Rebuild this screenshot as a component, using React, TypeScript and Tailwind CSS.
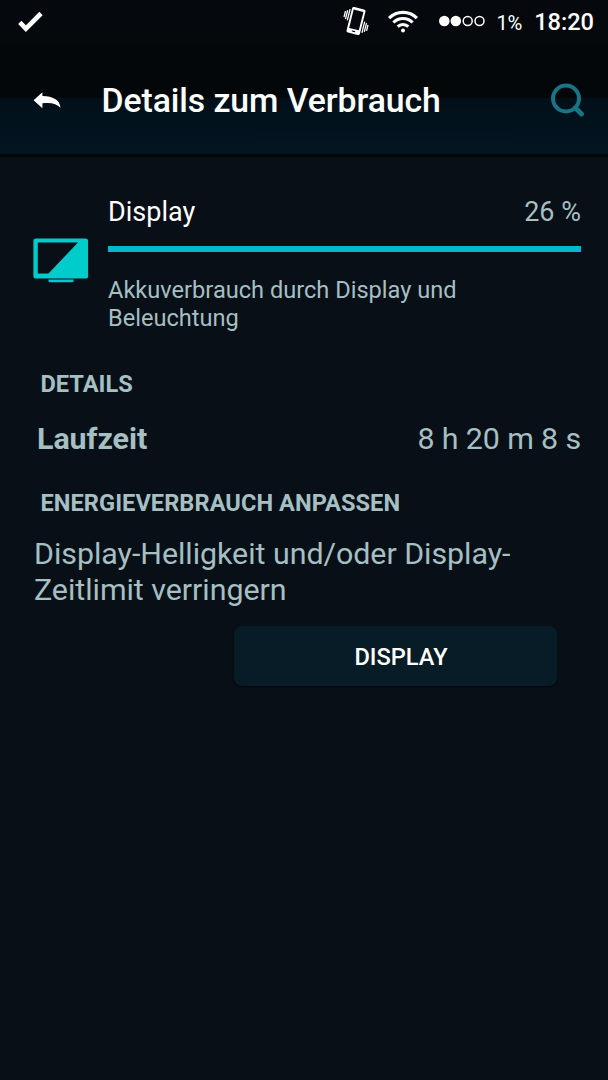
function VibrateIcon() {
  return (
    <svg className="h-7 w-7" viewBox="0 0 28 28" fill="none">
      <g transform="rotate(14 14 14)">
        <rect x="7.1" y="0.8" width="13.8" height="26.4" rx="2" fill="#fff" />
        <rect x="9" y="3.4" width="10" height="19" fill="#05090d" />
        <rect x="12.3" y="24" width="3.4" height="1.2" rx=".5" fill="#05090d" />
        <path d="M5.4 4v11.500M3.3 5.6v9M1.4 7v6M22.6 12.500v11.500M24.7 13.6v9M26.6 15v6" stroke="#fff" strokeWidth="1.300" />
      </g>
    </svg>
  );
}

function WifiIcon() {
  return (
    <svg className="h-6 w-8" viewBox="0 0 32 24" fill="none" stroke="#fff" strokeWidth="3.2" strokeLinecap="butt">
      <path d="M2.1 9.2a19.6 19.6 0 0 1 27.800 0M6.4 13.5a13.5 13.5 0 0 1 19.200 0M10.7 17.7a7.5 7.5 0 0 1 10.600 0" />
      <circle cx="16" cy="21.4" r="2" fill="#fff" stroke="none" />
    </svg>
  );
}

function SignalDots() {
  return (
    <svg className="h-3 w-[46px]" viewBox="0 0 46 12" fill="none">
      <circle cx="5.3" cy="6" r="5.3" fill="#fff" />
      <circle cx="16.8" cy="6" r="5.3" fill="#fff" />
      <circle cx="28.7" cy="6" r="4.5" stroke="#fff" strokeWidth="1.5" />
      <circle cx="40.5" cy="6" r="4.5" stroke="#fff" strokeWidth="1.5" />
    </svg>
  );
}

function StatusBar() {
  return (
    <div className="flex h-[42px] items-center bg-[#05090d] pl-[18px] pr-[14px]">
      <svg className="mt-px h-[22px] w-[26px]" viewBox="0 0 26 22" fill="none" stroke="#fff" strokeWidth="4.6">
        <path d="M1.8 11.3l6.1 6.3L23 2.5" strokeLinejoin="miter" />
      </svg>
      <div className="ml-auto flex items-center">
        <VibrateIcon />
        <div className="ml-[17px] flex">
          <WifiIcon />
        </div>
        <div className="ml-[20px]">
          <SignalDots />
        </div>
        <span className="ml-[11px] mt-[4px] text-[20.2px] leading-none tracking-[-0.2px]">1%</span>
        <span className="ml-[12px] mt-[4px] text-[23.6px] font-medium leading-none">18:20</span>
      </div>
    </div>
  );
}

function Header() {
  return (
    <header className="flex h-[115px] items-center border-b-[3px] border-[#02050a] bg-[linear-gradient(to_bottom,#030709_0px,#030709_56px,#020f19_56px,#021622_112px)] pl-[33px] pr-[23px] pt-[4px]">
      <svg className="mt-px h-[17px] w-7" viewBox="0 0 28 17" fill="#fff">
        <path d="M.6 8.2L9.4.3v3.8c9.8-.1 17.6 3.8 18.1 11.7-4-4.3-9.5-5.6-18.1-4.5v4.9z" />
      </svg>
      <h1 className="ml-[40.500px] mt-px text-[33.75px] font-medium leading-none tracking-[-0.07px]">Details zum Verbrauch</h1>
      <svg className="-mt-px ml-auto h-[34px] w-[34px]" viewBox="0 0 34 34" fill="none" stroke="#197586">
        <circle cx="15" cy="15.5" r="13" strokeWidth="4" />
        <path d="M24.500 25l6 6" strokeWidth="4.8" strokeLinecap="round" />
      </svg>
    </header>
  );
}

function DisplayIcon() {
  return (
    <svg className="h-[45px] w-14 shrink-0" viewBox="0 0 56 45" fill="#00cccc">
      <path
        fillRule="evenodd"
        d="M3 .5h49.500a2.600 2.600 0 0 1 2.600 2.600v34.800a2.600 2.600 0 0 1-2.600 2.600H3a2.600 2.600 0 0 1-2.600-2.600V3.100A2.600 2.600 0 0 1 3 .5zM4.800 4.500v31h10.700L45 4.500z"
      />
      <path d="M15.500 41.500h25v1.700a1 1 0 0 1-1 1h-23a1 1 0 0 1-1-1z" />
    </svg>
  );
}

export default function App() {
  return (
    <div className="flex h-[1080px] w-[608px] flex-col overflow-hidden bg-[#080f17] font-['Roboto',sans-serif] text-white">
      <StatusBar />
      <Header />
      <main className="flex flex-col pt-[39px] text-[#a5bfc2]">
        <section className="flex pl-[33px] pr-[27px]">
          <div className="mt-[42px]">
            <DisplayIcon />
          </div>
          <div className="ml-[19px] flex-1">
            <div className="flex justify-between text-[27px] leading-[32px]">
              <span className="text-white">Display</span>
              <span>26 %</span>
            </div>
            <div className="mt-[18px] h-[6px] bg-[#00b8cd]" />
            <p className="mt-[25px] text-[23.6px] leading-[27.5px]">
              Akkuverbrauch durch Display und
              <br />
              Beleuchtung
            </p>
          </div>
        </section>
        <h2 className="mt-[38px] pl-[40.5px] text-[23.6px] font-bold leading-[28px]">DETAILS</h2>
        <div className="mt-[23px] flex justify-between pl-[37px] pr-[27px] text-[30.4px] leading-[36px]">
          <span className="font-bold tracking-[-0.05px]">Laufzeit</span>
          <span className="tracking-[-0.13px]">8 h 20 m 8 s</span>
        </div>
        <h2 className="mt-[32px] pl-[40.5px] text-[23.6px] font-bold leading-[28px] tracking-[0.05px]">
          ENERGIEVERBRAUCH ANPASSEN
        </h2>
        <p className="mt-[19px] pl-[34px] text-[30.4px] leading-[35.5px] tracking-[-0.04px]">
          Display-Helligkeit und/oder Display-
          <br />
          Zeitlimit verringern
        </p>
        <button className="ml-[234px] mt-[19px] h-[60px] w-[323px] rounded-[8px] bg-[#071c26] pl-[11px] pt-[3px] text-[23.6px] font-medium text-white shadow-[0_1px_2px_#04090f]">
          DISPLAY
        </button>
      </main>
    </div>
  );
}
